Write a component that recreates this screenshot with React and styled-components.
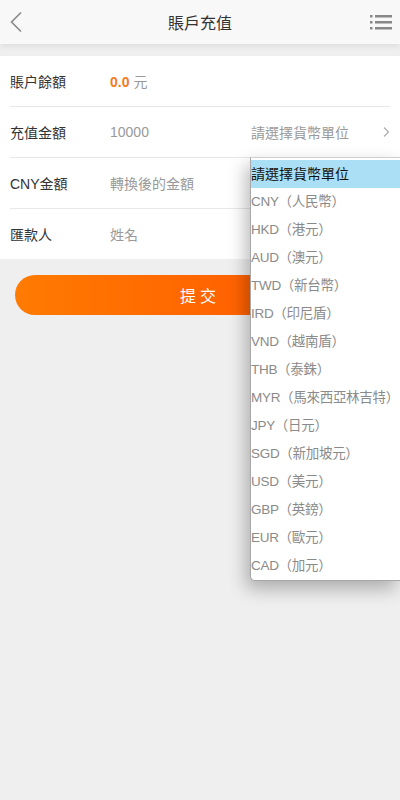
import React, { useState } from "react";
import styled, { createGlobalStyle } from "styled-components";

const GlobalStyle = createGlobalStyle`
  html, body {
    margin: 0;
    padding: 0;
    background: #efefef;
    overflow-x: hidden;
  }
  body {
    font-family: "Liberation Sans", "Noto Sans CJK TC", sans-serif;
    -webkit-font-smoothing: antialiased;
  }
  * { box-sizing: border-box; }
`;

const Page = styled.div`
  width: 400px;
  min-height: 800px;
  background: #efefef;
`;

const Header = styled.header`
  height: 44px;
  display: flex;
  align-items: center;
  justify-content: space-between;
  padding: 0 8px;
  background: #f8f8f8;
  box-shadow: 0 2px 6px rgba(0, 0, 0, 0.08);
  position: relative;
  z-index: 1;
`;

const IconButton = styled.button`
  width: 30px;
  height: 44px;
  border: 0;
  padding: 0;
  background: transparent;
  display: flex;
  align-items: center;
  justify-content: ${(p) => (p.$right ? "flex-end" : "flex-start")};
`;

const Title = styled.h1`
  margin: 0;
  font-size: 16px;
  font-weight: normal;
  color: #333;
`;

const Body = styled.main`
  padding-top: 12px;
`;

const Card = styled.section`
  background: #fff;
  padding: 0 10px;
`;

const Row = styled.div`
  height: ${(p) => (p.$last ? "50px" : "51px")};
  display: flex;
  align-items: center;
  padding-bottom: 1px;
  border-bottom: ${(p) => (p.$last ? "none" : "1px solid #e8e8e8")};
  font-size: 14px;
`;

const Label = styled.div`
  width: 100px;
  color: #333;
`;

const Value = styled.div`
  flex: 1;
  color: #999;
`;

const Amount = styled.span`
  color: #f5791f;
  font-weight: bold;
  margin-right: 4px;
`;

const SelectCell = styled.div`
  position: relative;
  width: 140px;
  height: 100%;
  display: flex;
  align-items: center;
  justify-content: space-between;
  color: #999;
  padding-left: 1px;
`;

const Options = styled.ul`
  position: absolute;
  top: calc(100% + 1px);
  left: 0;
  width: 150px;
  margin: 0;
  padding: 2px 0 0;
  list-style: none;
  background: #fff;
  border-left: 1px solid #a8a8a8;
  border-bottom: 1px solid #a8a8a8;
  border-top: 1px solid #d0d0d0;
  border-bottom-left-radius: 5px;
  box-shadow: -4px 8px 18px rgba(0, 0, 0, 0.28);
  z-index: 5;
`;

const Option = styled.li`
  height: 28px;
  line-height: 28px;
  white-space: nowrap;
  font-size: ${(p) => (p.$active ? "14px" : "13.5px")};
  letter-spacing: ${(p) => (p.$active ? "0" : "-0.3px")};
  color: ${(p) => (p.$active ? "#111" : "#8a8a8a")};
  background: ${(p) => (p.$active ? "#abdff5" : "transparent")};
`;

const Submit = styled.button`
  display: block;
  width: 370px;
  height: 40px;
  margin: 16px auto 0;
  border: 0;
  border-radius: 20px;
  background: linear-gradient(90deg, #ff7b02 0%, #ff6400 55%, #ff5a00 100%);
  color: #fff;
  font-family: inherit;
  font-size: 16px;
  letter-spacing: 4px;
`;

const currencies = [
  "請選擇貨幣單位",
  "CNY（人民幣）",
  "HKD（港元）",
  "AUD（澳元）",
  "TWD（新台幣）",
  "IRD（印尼盾）",
  "VND（越南盾）",
  "THB（泰銖）",
  "MYR（馬來西亞林吉特）",
  "JPY（日元）",
  "SGD（新加坡元）",
  "USD（美元）",
  "GBP（英鎊）",
  "EUR（歐元）",
  "CAD（加元）",
];

function BackIcon() {
  return (
    <svg width="16" height="24" viewBox="0 0 16 24">
      <path d="M13 2.5 L3.5 12 L13 21.5" fill="none" stroke="#888" strokeWidth="1.6" />
    </svg>
  );
}

function MenuIcon() {
  return (
    <svg width="22" height="18" viewBox="0 0 22 18">
      <g fill="#888">
        <rect x="0" y="2" width="2.5" height="2.5" />
        <rect x="0" y="8" width="2.5" height="2.5" />
        <rect x="0" y="14" width="2.5" height="2.5" />
        <rect x="5" y="2" width="17" height="2.5" />
        <rect x="5" y="8" width="17" height="2.5" />
        <rect x="5" y="14" width="17" height="2.5" />
      </g>
    </svg>
  );
}

function Chevron() {
  return (
    <svg width="8" height="12" viewBox="0 0 8 12">
      <path d="M2 1.5 L6.5 6 L2 10.5" fill="none" stroke="#aaa" strokeWidth="1.1" />
    </svg>
  );
}

export default function App() {
  const [selected] = useState(0);

  return (
    <Page>
      <GlobalStyle />
      <Header>
        <IconButton>
          <BackIcon />
        </IconButton>
        <Title>賬戶充值</Title>
        <IconButton $right>
          <MenuIcon />
        </IconButton>
      </Header>
      <Body>
        <Card>
          <Row>
            <Label>賬户餘額</Label>
            <Value>
              <Amount>0.0</Amount>元
            </Value>
          </Row>
          <Row>
            <Label>充值金額</Label>
            <Value>10000</Value>
            <SelectCell>
              <span>請選擇貨幣單位</span>
              <Chevron />
              <Options>
                {currencies.map((c, i) => (
                  <Option key={c} $active={i === selected}>
                    {c}
                  </Option>
                ))}
              </Options>
            </SelectCell>
          </Row>
          <Row>
            <Label>CNY金額</Label>
            <Value>轉換後的金額</Value>
          </Row>
          <Row $last>
            <Label>匯款人</Label>
            <Value>姓名</Value>
          </Row>
        </Card>
        <Submit>提交</Submit>
      </Body>
    </Page>
  );
}
